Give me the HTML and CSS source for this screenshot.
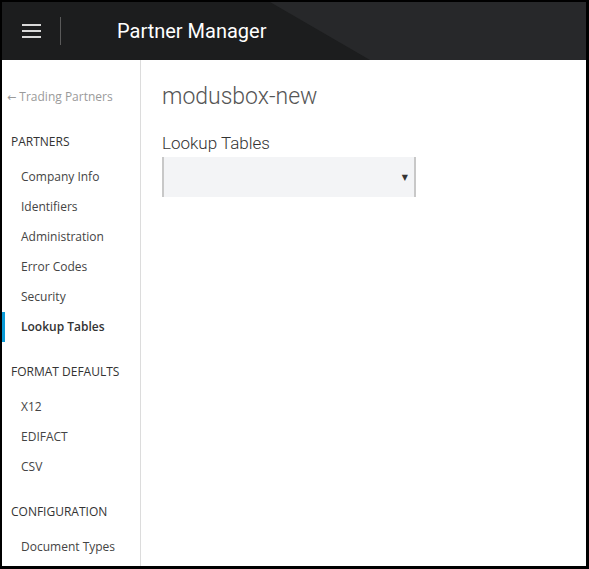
FILE: index.html
```html
<!DOCTYPE html>
<html>
<head>
<meta charset="utf-8">
<link rel="stylesheet" href="styles.css">
</head>
<body>
<div class="frame">
  <header class="topbar">
    <div class="burger">
      <span></span><span></span><span></span>
    </div>
    <div class="divider"></div>
    <div class="title">Partner Manager</div>
  </header>
  <div class="body">
    <nav class="sidebar">
      <div class="back"><span class="back-arrow">&#8592;</span> Trading Partners</div>
      <div class="section">PARTNERS</div>
      <div class="item">Company Info</div>
      <div class="item">Identifiers</div>
      <div class="item">Administration</div>
      <div class="item">Error Codes</div>
      <div class="item">Security</div>
      <div class="item active">Lookup Tables</div>
      <div class="section">FORMAT DEFAULTS</div>
      <div class="item">X12</div>
      <div class="item">EDIFACT</div>
      <div class="item">CSV</div>
      <div class="section">CONFIGURATION</div>
      <div class="item">Document Types</div>
    </nav>
    <main class="content">
      <h1 class="heading">modusbox-new</h1>
      <div class="label">Lookup Tables</div>
      <div class="select"><span class="arrow">&#9660;</span></div>
    </main>
  </div>
</div>
</body>
</html>
```
FILE: styles.css
```css
html, body {
  margin: 0;
  padding: 0;
  background: #000;
  height: 100%;
}
.frame {
  position: fixed;
  top: 2px;
  left: 2px;
  right: 3px;
  bottom: 3px;
  background: #fff;
  display: flex;
  flex-direction: column;
  overflow: hidden;
}
.topbar {
  height: 58px;
  flex: none;
  display: flex;
  align-items: center;
  background: #27282a;
  position: relative;
}
.topbar::before {
  content: "";
  position: absolute;
  left: 0;
  top: 0;
  bottom: 0;
  width: 368px;
  background: #1c1d1e;
  clip-path: polygon(0 0, 268px 0, 368px 58px, 0 58px);
}
.burger {
  position: relative;
  margin-left: 20px;
  width: 19px;
  display: flex;
  flex-direction: column;
  gap: 4px;
}
.burger span {
  display: block;
  height: 2px;
  background: #d8d8d8;
}
.divider {
  position: relative;
  margin-left: 19px;
  width: 1px;
  height: 28px;
  background: #5a5a5a;
}
.title {
  position: relative;
  margin-left: 56px;
  color: #fff;
  font-family: Roboto, "Liberation Sans", sans-serif;
  font-size: 20px;
  line-height: 24px;
}
.body {
  flex: 1;
  display: flex;
  min-height: 0;
}
.sidebar {
  width: 138px;
  flex: none;
  border-right: 1px solid #dcdcdc;
  font-family: "Open Sans", sans-serif;
  font-size: 12px;
  color: #444;
  padding-top: 27px;
}
.back {
  color: #9a9a9a;
  line-height: 20px;
  height: 20px;
  padding-left: 5px;
}
.back-arrow {
  font-family: "DejaVu Sans", sans-serif;
  font-size: 11px;
  line-height: 1;
}
.section {
  line-height: 20px;
  padding-left: 9px;
  margin-top: 20px;
  margin-bottom: 10px;
  color: #333;
}
.back + .section {
  margin-top: 25px;
}
.item {
  line-height: 30px;
  height: 30px;
  padding-left: 19px;
  color: #444;
}
.item.active {
  font-weight: 600;
  color: #333;
  box-shadow: inset 3px 0 0 #0a9ad6;
}
.content {
  flex: 1;
  padding-left: 21px;
  padding-top: 24px;
}
.heading {
  margin: 0;
  font-family: Roboto, "Liberation Sans", sans-serif;
  font-weight: 300;
  font-size: 23px;
  line-height: 26px;
  color: #555;
}
.label {
  margin-top: 23px;
  font-family: Roboto, "Liberation Sans", sans-serif;
  font-weight: 300;
  font-size: 17px;
  line-height: 20px;
  color: #333;
}
.select {
  margin-top: 4px;
  width: 250px;
  height: 40px;
  background: #f3f4f6;
  border-left: 2px solid #c8c8c8;
  border-right: 2px solid #c8c8c8;
  display: flex;
  align-items: center;
  justify-content: flex-end;
}
.arrow {
  font-size: 8px;
  color: #333;
  margin-right: 6px;
  font-family: "DejaVu Sans", sans-serif;
}
```
